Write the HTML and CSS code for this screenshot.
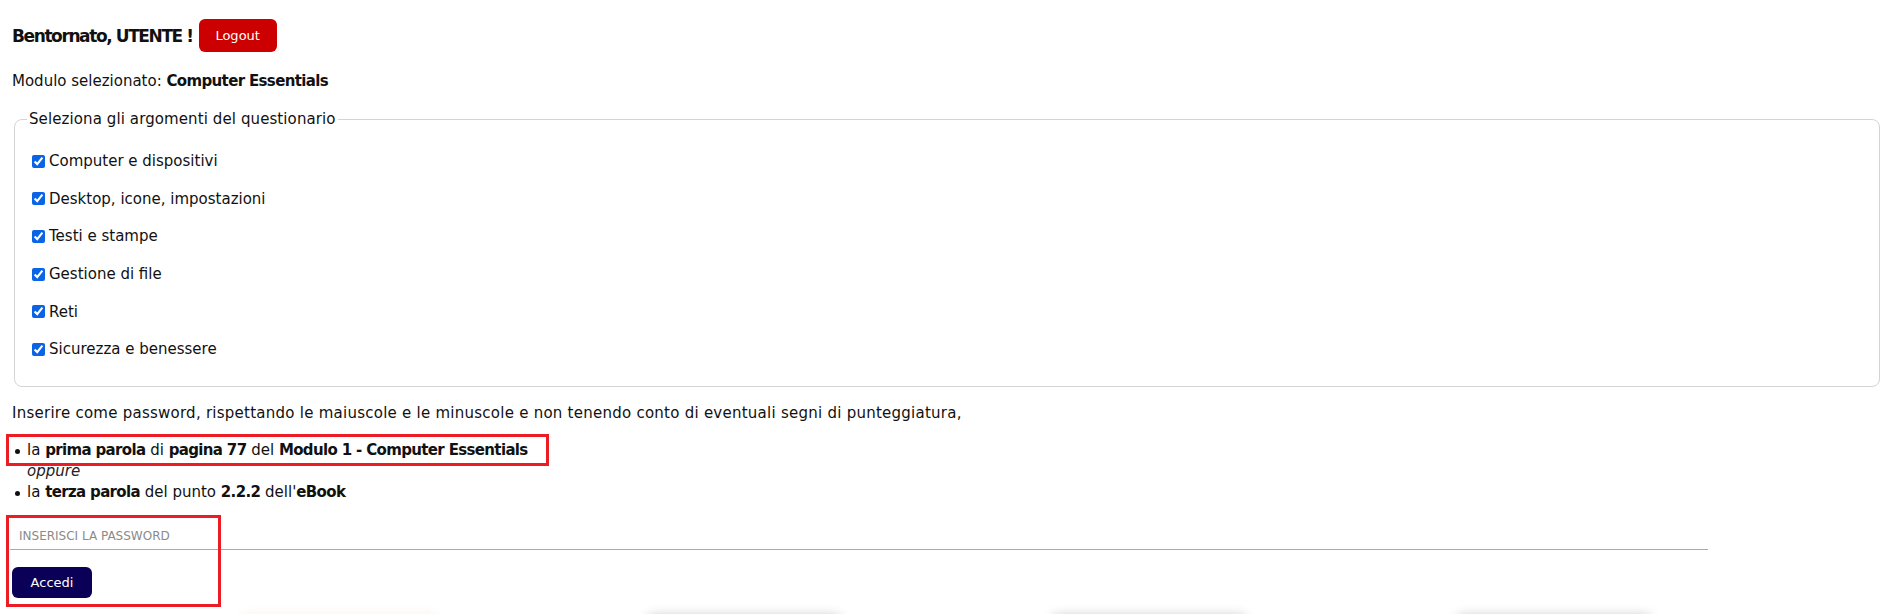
FILE: index.html
```html
<!DOCTYPE html>
<html lang="it">
<head>
<meta charset="utf-8">
<title>Questionario</title>
<link rel="stylesheet" href="styles.css">
</head>
<body>
<div class="page">
  <div class="welcome">
    <h2 class="welcome-title">Bentornato, UTENTE !</h2>
    <button class="btn btn-logout" type="button">Logout</button>
  </div>
  <p class="module">Modulo selezionato: <strong>Computer Essentials</strong></p>

  <fieldset class="topics">
    <legend class="topics-legend">Seleziona gli argomenti del questionario</legend>
    <label class="topic"><input type="checkbox" checked>Computer e dispositivi</label>
    <label class="topic"><input type="checkbox" checked>Desktop, icone, impostazioni</label>
    <label class="topic"><input type="checkbox" checked>Testi e stampe</label>
    <label class="topic"><input type="checkbox" checked>Gestione di file</label>
    <label class="topic"><input type="checkbox" checked>Reti</label>
    <label class="topic"><input type="checkbox" checked>Sicurezza e benessere</label>
  </fieldset>

  <p class="instructions">Inserire come password, rispettando le maiuscole e le minuscole e non tenendo conto di eventuali segni di punteggiatura,</p>
  <ul class="hints">
    <li class="hint hint-marked">la <b>prima parola</b> di <b>pagina 77</b> del <b>Modulo 1 - Computer Essentials</b><span class="mark mark-hint"></span></li>
    <li class="or"><i>oppure</i></li>
    <li class="hint">la <b>terza parola</b> del punto <b>2.2.2</b> dell'<b>eBook</b></li>
  </ul>

  <form class="login">
    <input class="password" type="text" placeholder="INSERISCI LA PASSWORD">
    <button class="btn btn-accedi" type="button">Accedi</button>
    <span class="mark mark-login"></span>
  </form>

  <div class="cards">
    <div class="card card-yellow"></div>
    <div class="card"></div>
    <div class="card"></div>
    <div class="card"></div>
  </div>
</div>
</body>
</html>
```
FILE: styles.css
```css
* { box-sizing: border-box; }
html, body { margin: 0; padding: 0; background: #fff; }
body {
  font-family: "URW Gothic", "Century Gothic", "DejaVu Sans", sans-serif;
  color: #111;
  font-size: 15px;
  overflow: hidden;
}
b, strong { font-weight: bold; letter-spacing: -0.65px; }
.page { padding: 0 15px 0 12px; }

.welcome {
  display: flex;
  align-items: center;
  gap: 6px;
  padding-top: 19px;
}
.welcome-title {
  margin: 0;
  font-size: 17px;
  font-weight: bold;
  letter-spacing: -1.4px;
}
.btn {
  border: none;
  color: #fff;
  font-family: inherit;
  font-size: 13px;
  border-radius: 6px;
  cursor: pointer;
}
.btn-logout { background: #cc0000; width: 78px; height: 33px; }

.module { margin: 19px 0 0; font-size: 15px; line-height: 20px; }

.topics {
  margin: 19px 0 0 2px;
  border: 1px solid #d4d4d4;
  border-radius: 8px;
  padding: 23px 14px 27px 16px;
  display: flex;
  flex-direction: column;
  gap: 17.7px;
}
.topics-legend { padding: 0 2px; font-size: 15px; margin-left: -4px; letter-spacing: 0.1px; }
.topic {
  display: flex;
  align-items: center;
  height: 20px;
  font-size: 15px;
}
.topic input {
  width: 13px; height: 13px;
  margin: 0 4px 0 1px;
  accent-color: #0b63e5;
}

.instructions { margin: 16px 0 0; line-height: 20px; letter-spacing: 0.25px; }
.hints {
  list-style: none;
  margin: 17px 0 0;
  padding: 0;
  line-height: 21px;
}
.hint { position: relative; padding-left: 15px; width: fit-content; }
.hint::before {
  content: "";
  position: absolute;
  left: 3px; top: 9px;
  width: 5px; height: 5px;
  border-radius: 50%;
  background: #111;
}
.or { padding-left: 15px; color: #222; }
.mark {
  position: absolute;
  border: 3px solid #ec1c24;
  pointer-events: none;
}
.mark-hint { left: -6px; right: -21px; top: -6px; bottom: -5px; }

.login {
  position: relative;
  display: flex;
  flex-direction: column;
  align-items: flex-start;
  gap: 17px;
  margin-top: 15px;
}
.password {
  width: 1698px;
  margin-left: -2px;
  height: 32px;
  border: none;
  border-bottom: 1px solid #aaa;
  padding: 8px 9px 4px;
  font-family: inherit;
  font-size: 12px;
  outline: none;
}
.password::placeholder { color: #8a8a8a; }
.btn-accedi { background: #0b0058; width: 80px; height: 31px; }
.mark-login { left: -6px; top: -3px; width: 215px; height: 92px; }

.cards {
  display: flex;
  justify-content: center;
  gap: 209px;
  margin-top: 17px;
}
.card {
  width: 196px;
  height: 200px;
  border-radius: 8px;
  background: #fff;
  box-shadow: 0 0 12px rgba(0,0,0,0.2);
}
.card-yellow { box-shadow: 0 0 12px rgba(200,160,60,0.16); }
```
